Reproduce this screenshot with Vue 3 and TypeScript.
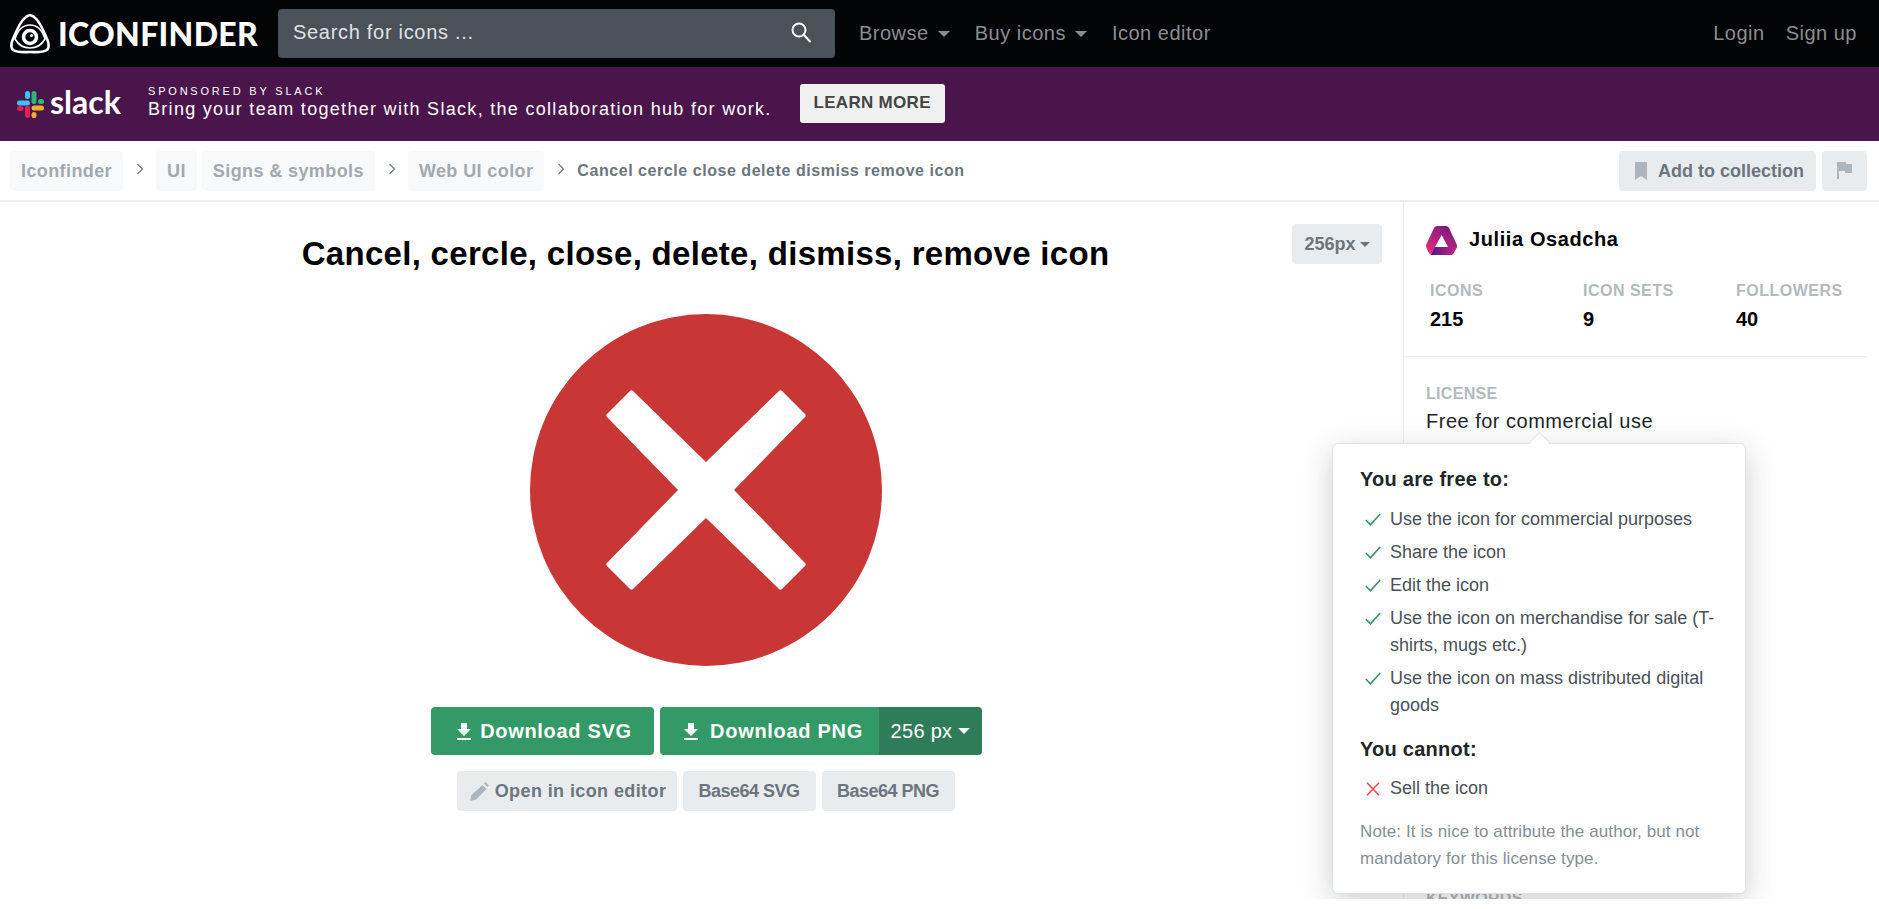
<template>
  <div class="page">
    <header class="topbar">
      <a class="logo">
        <svg width="42" height="42" viewBox="0 0 42 42" fill="none" stroke="#fff">
          <path d="M21 2 C27 3 31 10 35 19 C38 26 42 33 38 37 C33 40 27 39 21 39 C15 39 9 40 4 37 C0 33 4 26 7 19 C11 10 15 3 21 2Z" stroke-width="2.6" />
          <path d="M6 26 C9 16 15 12 21 12 C27 12 33 16 36 26 C32 33 27 35 21 35 C15 35 10 33 6 26Z" stroke-width="1.6" />
          <circle cx="21" cy="24" r="6.5" stroke-width="3.6" />
          <circle cx="22.5" cy="22.5" r="1.6" fill="#fff" stroke="none" />
        </svg>
        <span class="logo-text">ICONFINDER</span>
      </a>
      <div class="search">
        <span>Search for icons ...</span>
        <svg width="22" height="22" viewBox="0 0 22 22" fill="none" stroke="#fff" stroke-width="2">
          <circle cx="9" cy="9" r="6.5" />
          <path d="M14 14l6 6.5" stroke-linecap="round" />
        </svg>
      </div>
      <nav class="nav nav-left">
        <a v-for="item in navItems" :key="item.label">
          {{ item.label }}<i v-if="item.caret" class="caret"></i>
        </a>
      </nav>
      <nav class="nav nav-right">
        <a>Login</a>
        <a>Sign up</a>
      </nav>
    </header>

    <section class="promo">
      <div class="slack">
        <svg width="27" height="27" viewBox="0 0 27 27">
          <rect x="0" y="9.5" width="13" height="5" rx="2.5" fill="#36c5f0" />
          <rect x="8" y="0" width="5" height="8" rx="2.5" fill="#36c5f0" />
          <rect x="14.5" y="0" width="5" height="13" rx="2.5" fill="#2eb67d" />
          <rect x="21" y="8" width="6" height="5" rx="2.5" fill="#2eb67d" />
          <rect x="14.5" y="14.5" width="12.5" height="5" rx="2.5" fill="#ecb22e" />
          <rect x="14.5" y="21" width="5" height="6" rx="2.5" fill="#ecb22e" />
          <rect x="8" y="14.5" width="5" height="12.5" rx="2.5" fill="#e01e5a" />
          <rect x="0" y="15" width="6.5" height="5" rx="2.5" fill="#e01e5a" />
        </svg>
        <span>slack</span>
      </div>
      <div class="promo-copy">
        <small>SPONSORED BY SLACK</small>
        <p>Bring your team together with Slack, the collaboration hub for work.</p>
      </div>
      <button class="learn">LEARN MORE</button>
    </section>

    <div class="crumbs">
      <template v-for="c in crumbGroups" :key="c.join()">
        <a v-for="name in c" :key="name" class="chip">{{ name }}</a>
        <svg class="chev" width="8" height="12" viewBox="0 0 8 12" fill="none" stroke="#6c757d" stroke-width="1.2">
          <path d="M1.5 1l5 5-5 5" />
        </svg>
      </template>
      <strong class="current">Cancel cercle close delete dismiss remove icon</strong>
      <div class="crumb-actions">
        <button class="btn-gray collect">
          <svg width="14" height="18" viewBox="0 0 14 18" fill="#adb5bd"><path d="M1 0h12v18l-6-4-6 4z" /></svg>
          Add to collection
        </button>
        <button class="btn-gray flag">
          <svg width="15" height="17" viewBox="0 0 15 17" fill="#adb5bd"><path d="M0 0h9v2h6v9H8V9H2v8H0z" /></svg>
        </button>
      </div>
    </div>

    <main class="body">
      <section class="preview">
        <button class="btn-gray size">256px<i class="caret"></i></button>
        <h1>Cancel, cercle, close, delete, dismiss, remove icon</h1>
        <svg class="big-icon" width="352" height="352" viewBox="1 1 352 352">
          <circle cx="177" cy="177" r="176" fill="#c93636" />
          <path d="M177 149 L250 78 Q251.500 76.500 253 78 L276 101 Q277.500 102.500 276 104 L205 177 L276 250 Q277.500 251.500 276 253 L253 276 Q251.500 277.500 250 276 L177 205 L104 276 Q102.500 277.500 101 276 L78 253 Q76.500 251.500 78 250 L149 177 L78 104 Q76.500 102.500 78 101 L101 78 Q102.500 76.500 104 78 Z" fill="#fff" />
        </svg>
        <div class="downloads">
          <button class="btn-green svg-btn">
            <svg width="16" height="17" viewBox="0 0 16 17" fill="#fff"><path d="M5 0h6v6h4l-7 7-7-7h4zM1 15h14v2H1z" /></svg>
            Download SVG
          </button>
          <div class="png-group">
            <button class="btn-green png-btn">
              <svg width="16" height="17" viewBox="0 0 16 17" fill="#fff"><path d="M5 0h6v6h4l-7 7-7-7h4zM1 15h14v2H1z" /></svg>
              Download PNG
            </button>
            <button class="png-size">256 px<i class="caret white"></i></button>
          </div>
        </div>
        <div class="extras">
          <button class="btn-gray extra editor">
            <svg width="19" height="19" viewBox="0 0 19 19" fill="#adb5bd"><path d="M12.5 3l4 4L6 17.5 0 19l1.500-6zM14 1.500 15.500 0 19 3.500 17.500 5z" /></svg>
            Open in icon editor
          </button>
          <button class="btn-gray extra b64">Base64 SVG</button>
          <button class="btn-gray extra b64">Base64 PNG</button>
        </div>
      </section>

      <aside class="side">
        <div class="author">
          <svg width="31" height="29" viewBox="0 0 31 29">
            <defs>
              <linearGradient id="authorGrad" x1="0" y1="1" x2="0.7" y2="0">
                <stop offset="0" stop-color="#ef2f7b" />
                <stop offset="1" stop-color="#7a1a7e" />
              </linearGradient>
              <linearGradient id="authorBand" x1="0" y1="0" x2="1" y2="0">
                <stop offset="0" stop-color="#4a1a88" />
                <stop offset="1" stop-color="#d0217f" />
              </linearGradient>
            </defs>
            <path fill-rule="evenodd" d="M11 0h9q2 0 3 2l7.500 16q1 2 0 4l-3 5q-1 2-3 2H6q-2 0-3-2l-2.500-5q-1-2 0-4L8 2q1-2 3-2zM15.700 9L9 21h13z" fill="url(#authorGrad)" />
            <path d="M9 21h22l-3.500 6q-1 2-3 2H5z" fill="url(#authorBand)" />
          </svg>
          <strong>Juliia Osadcha</strong>
        </div>
        <div class="stats">
          <div v-for="s in stats" :key="s.label" class="stat">
            <span>{{ s.label }}</span>
            <b>{{ s.value }}</b>
          </div>
        </div>
        <div class="meta">
          <span class="label">LICENSE</span>
          <p>Free for commercial use</p>
          <span class="label keywords">KEYWORDS</span>
        </div>

        <div class="popover">
          <h4>You are free to:</h4>
          <ul>
            <li v-for="t in allowed" :key="t">
              <svg width="16" height="13" viewBox="0 0 16 13" fill="none" stroke="#339966" stroke-width="1.6"><path d="M.8 7l4.6 4.800L15.200 1" /></svg>
              <span>{{ t }}</span>
            </li>
          </ul>
          <h4 class="second">You cannot:</h4>
          <ul class="denied">
            <li>
              <svg width="16" height="14" viewBox="0 0 16 14" fill="none" stroke="#ef4b4b" stroke-width="1.6"><path d="M2 .8l12 12.400M14 .8L2 13.200" /></svg>
              <span>Sell the icon</span>
            </li>
          </ul>
          <p class="note">Note: It is nice to attribute the author, but not mandatory for this license type.</p>
        </div>
      </aside>
    </main>
  </div>
</template>

<script setup lang="ts">
const navItems = [
  { label: 'Browse', caret: true },
  { label: 'Buy icons', caret: true },
  { label: 'Icon editor', caret: false },
];

const crumbGroups: string[][] = [['Iconfinder'], ['UI', 'Signs & symbols'], ['Web UI color']];

const stats = [
  { label: 'ICONS', value: '215' },
  { label: 'ICON SETS', value: '9' },
  { label: 'FOLLOWERS', value: '40' },
];

const allowed = [
  'Use the icon for commercial purposes',
  'Share the icon',
  'Edit the icon',
  'Use the icon on merchandise for sale (T-shirts, mugs etc.)',
  'Use the icon on mass distributed digital goods',
];
</script>

<style>
html,
body {
  background: #fff;
}
</style>

<style scoped>
.page {
  height: 899px;
  overflow: hidden;
  font-family: "Liberation Sans", Arial, sans-serif;
  color: #000;
}
button {
  font-family: inherit;
  border: none;
  cursor: pointer;
}
.topbar {
  height: 67px;
  background: #030406;
  display: flex;
  align-items: center;
  padding: 0 22px 0 9px;
}
.logo {
  display: flex;
  align-items: center;
  color: #fff;
  width: 269px;
  gap: 7px;
}
.logo-text {
  font-family: Lato, sans-serif;
  font-weight: 900;
  font-size: 32px;
  letter-spacing: 0.3px;
}
.search {
  width: 557px;
  height: 49px;
  margin-bottom: 1px;
  background: #4a5159;
  border-radius: 4px;
  display: flex;
  align-items: center;
  justify-content: space-between;
  padding: 0 23px 2px 15px;
  box-sizing: border-box;
  font-size: 20px;
  letter-spacing: 0.7px;
  color: #dfe2e5;
}
.nav {
  display: flex;
  gap: 21px;
  margin-left: 24px;
  font-size: 20px;
  letter-spacing: 0.5px;
  color: #8b8d8f;
}
.nav-left {
  gap: 25px;
}
.nav-right {
  margin-left: auto;
}
.caret {
  display: inline-block;
  width: 0;
  height: 0;
  border-left: 6px solid transparent;
  border-right: 6px solid transparent;
  border-top: 6px solid #8b8d8f;
  margin-left: 9px;
  vertical-align: 3px;
}
.promo {
  height: 74px;
  background: #4a154b;
  display: flex;
  align-items: center;
  padding-left: 17px;
  color: #fff;
}
.slack {
  display: flex;
  align-items: center;
  gap: 6px;
  width: 131px;
  font-family: Lato, sans-serif;
  font-weight: 700;
  font-size: 32px;
}
.slack span {
  line-height: 1;
  margin-top: -4px;
}
.promo-copy {
  margin-top: -3px;
}
.promo-copy small {
  display: block;
  font-size: 11px;
  letter-spacing: 2.8px;
  line-height: 13px;
}
.promo-copy p {
  margin: 0;
  font-size: 18px;
  letter-spacing: 1.3px;
  line-height: 22px;
}
.learn {
  margin: -2px 0 0 28px;
  width: 145px;
  height: 39px;
  background: #f0f0f0;
  border-radius: 3px;
  color: #444;
  font-size: 17px;
  letter-spacing: 0.3px;
  font-weight: 700;
}
.crumbs {
  height: 61px;
  box-sizing: border-box;
  border-bottom: 2px solid #eceeef;
  display: flex;
  align-items: center;
  padding: 0 12px 0 10px;
  font-size: 18px;
}
.chip {
  background: #f8f9fa;
  color: #a3a9af;
  font-weight: 700;
  letter-spacing: 0.4px;
  height: 40px;
  line-height: 40px;
  padding: 0 11px;
  border-radius: 4px;
  margin-right: 5px;
}
.chev {
  margin: 0 12px 4px 8px;
}
.current {
  font-size: 16px;
  letter-spacing: 0.55px;
  color: #6c757d;
  padding-top: 1px;
}
.crumb-actions {
  margin-left: auto;
  display: flex;
  gap: 6px;
}
.btn-gray {
  background: #e9ecef;
  color: #6c757d;
  font-weight: 700;
  border-radius: 4px;
  height: 40px;
  display: flex;
  align-items: center;
  justify-content: center;
}
.collect {
  width: 197px;
  font-size: 18px;
  gap: 10px;
  padding: 1px 0 0 3px;
}
.flag {
  width: 45px;
}
.body {
  display: flex;
}
.preview {
  flex: none;
  width: 1404px;
  height: 697px;
  box-sizing: border-box;
  border-right: 1px solid #eceeef;
  position: relative;
  display: flex;
  flex-direction: column;
  align-items: center;
  padding: 32px 0 0 8px;
}
.size {
  position: absolute;
  top: 22px;
  left: 1292px;
  width: 90px;
  font-size: 18px;
  padding: 0;
}
.size .caret {
  border-top-color: #6c757d;
  border-left-width: 5px;
  border-right-width: 5px;
  border-top-width: 5px;
  margin-left: 4px;
  vertical-align: 0;
}
h1 {
  margin: 0;
  font-size: 33px;
  letter-spacing: 0.3px;
  line-height: 40px;
  font-weight: 700;
}
.big-icon {
  margin-top: 40px;
}
.downloads {
  display: flex;
  gap: 6px;
  margin: 41px 0 0 2px;
}
.btn-green,
.png-size {
  height: 48px;
  color: #fff;
  font-size: 20px;
  display: flex;
  align-items: center;
  justify-content: center;
}
.btn-green {
  background: #339966;
  font-weight: 700;
  letter-spacing: 0.7px;
  gap: 8px;
}
.svg-btn {
  width: 223px;
  padding-left: 9px;
  border-radius: 4px;
}
.png-group {
  display: flex;
}
.png-btn {
  width: 219px;
  padding-left: 13px;
  gap: 11px;
  border-radius: 4px 0 0 4px;
}
.png-size {
  width: 103px;
  background: #2e7d58;
  border-radius: 0 4px 4px 0;
  letter-spacing: 0.3px;
}
.caret.white {
  border-top-color: #fff;
  margin-left: 6px;
}
.extras {
  display: flex;
  gap: 6px;
  margin-top: 16px;
}
.extra {
  padding: 0 12px;
  font-size: 18px;
}
.editor {
  width: 220px;
  padding: 0 0 0 3px;
  gap: 6px;
  letter-spacing: 0.4px;
}
.b64 {
  letter-spacing: -0.5px;
  min-width: 133px;
}
.side {
  flex: 1;
  min-width: 0;
  position: relative;
  padding-right: 12px;
}
.author {
  display: flex;
  align-items: center;
  gap: 12px;
  height: 29px;
  margin: 24px 0 0 22px;
  font-size: 20px;
  letter-spacing: 0.6px;
}
.author strong {
  margin-top: -2px;
}
.stats {
  display: grid;
  grid-template-columns: 153px 153px auto;
  padding: 0 0 0 26px;
  margin-top: 26px;
  height: 75px;
  border-bottom: 1px solid #eceeef;
}
.stat span {
  display: block;
  color: #b4b9be;
  font-weight: 700;
  font-size: 16px;
  letter-spacing: 0.5px;
  line-height: 20px;
}
.stat b {
  display: block;
  font-size: 20px;
  line-height: 24px;
  margin-top: 6px;
}
.meta {
  padding: 27px 0 0 22px;
}
.label {
  display: block;
  color: #b4b9be;
  font-weight: 700;
  font-size: 16px;
  letter-spacing: 0.3px;
  line-height: 20px;
}
.meta p {
  margin: 5px 0 0;
  font-size: 20px;
  letter-spacing: 0.5px;
  line-height: 24px;
  color: #212529;
}
.keywords {
  margin-top: 456px;
}
.popover {
  position: absolute;
  top: 241px;
  left: -72px;
  width: 414px;
  height: 451px;
  box-sizing: border-box;
  background: #fff;
  border: 1px solid #dee2e6;
  border-radius: 6px;
  box-shadow: 0 8px 30px rgba(33, 37, 41, 0.22);
  padding: 23px 27px;
  color: #495057;
}
.popover::before {
  content: '';
  position: absolute;
  top: -9px;
  left: 199px;
  width: 14px;
  height: 14px;
  background: #fff;
  border-left: 1px solid #dee2e6;
  border-top: 1px solid #dee2e6;
  transform: rotate(45deg);
}
h4 {
  margin: 0;
  font-size: 20px;
  letter-spacing: 0.25px;
  line-height: 24px;
  color: #212529;
  font-weight: 700;
}
ul {
  list-style: none;
  margin: 15px 0 0;
  padding: 0;
}
ul.denied {
  margin-top: 14px;
}
li {
  display: flex;
  gap: 9px;
  font-size: 18px;
  line-height: 27px;
  margin-bottom: 6px;
  padding-left: 5px;
}
li svg {
  flex: none;
  margin-top: 7px;
}
.second {
  margin-top: 18px;
}
.note {
  margin: 16px 0 0;
  font-size: 17px;
  letter-spacing: 0.1px;
  line-height: 27px;
  color: #868e96;
}
</style>
